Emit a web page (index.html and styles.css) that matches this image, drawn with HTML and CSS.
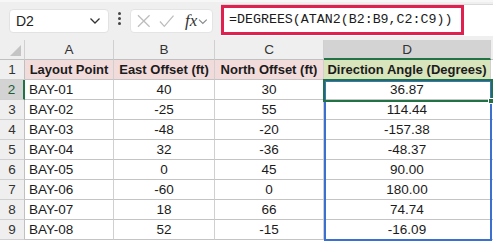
FILE: index.html
```html
<!DOCTYPE html>
<html>
<head>
<meta charset="utf-8">
<link rel="stylesheet" href="styles.css">
</head>
<body>
<div class="toolbar">
  <div class="namebox">
    <span class="name">D2</span>
    <svg class="chev" width="12" height="8" viewBox="0 0 12 8"><path d="M1.5 1.5 L6 6 L10.5 1.5" fill="none" stroke="#333" stroke-width="1.3"/></svg>
  </div>
  <div class="dots"><i></i><i></i><i></i></div>
  <div class="fxbox">
    <svg width="14" height="14" viewBox="0 0 14 14"><path d="M1 1 L13 13 M13 1 L1 13" stroke="#bdbdbd" stroke-width="1.3" fill="none"/></svg>
    <svg width="16" height="14" viewBox="0 0 16 14"><path d="M1 7.5 L5.5 12.5 L15 1.5" stroke="#bdbdbd" stroke-width="1.3" fill="none"/></svg>
    <span class="fx">fx</span>
    <svg width="10" height="7" viewBox="0 0 10 7"><path d="M1 1.5 L5 5.5 L9 1.5" fill="none" stroke="#888" stroke-width="1.2"/></svg>
  </div>
  <div class="formula">
    <div class="ftext">=DEGREES(ATAN2(B2:B9,C2:C9))</div>
  </div>
</div>
<div class="gap"></div>
<div class="sheet">
  <div class="grid">
    <div class="corner"><span class="tri"></span></div>
    <div class="ch">A</div><div class="ch">B</div><div class="ch">C</div><div class="ch sel">D</div><div class="ch end"></div>

    <div class="rh">1</div>
    <div class="c hd pink">Layout Point</div><div class="c hd pink">East Offset (ft)</div><div class="c hd pink">North Offset (ft)</div><div class="c hd green">Direction Angle (Degrees)</div><div class="c end"></div>

    <div class="rh rsel">2</div><div class="c l">BAY-01</div><div class="c">40</div><div class="c">30</div><div class="c">36.87</div><div class="c end"></div>
    <div class="rh">3</div><div class="c l">BAY-02</div><div class="c">-25</div><div class="c">55</div><div class="c">114.44</div><div class="c end"></div>
    <div class="rh">4</div><div class="c l">BAY-03</div><div class="c">-48</div><div class="c">-20</div><div class="c">-157.38</div><div class="c end"></div>
    <div class="rh">5</div><div class="c l">BAY-04</div><div class="c">32</div><div class="c">-36</div><div class="c">-48.37</div><div class="c end"></div>
    <div class="rh">6</div><div class="c l">BAY-05</div><div class="c">0</div><div class="c">45</div><div class="c">90.00</div><div class="c end"></div>
    <div class="rh">7</div><div class="c l">BAY-06</div><div class="c">-60</div><div class="c">0</div><div class="c">180.00</div><div class="c end"></div>
    <div class="rh">8</div><div class="c l">BAY-07</div><div class="c">18</div><div class="c">66</div><div class="c">74.74</div><div class="c end"></div>
    <div class="rh">9</div><div class="c l">BAY-08</div><div class="c">52</div><div class="c">-15</div><div class="c">-16.09</div><div class="c end"></div>
  </div>
  <div class="range"></div>
  <div class="active"><span class="handle"></span></div>
</div>
</body>
</html>
```
FILE: styles.css
```css
* { box-sizing: border-box; }
html, body { margin: 0; padding: 0; }
body {
  width: 493px;
  height: 244px;
  overflow: hidden;
  background: #ffffff;
  font-family: "Liberation Sans", Arial, sans-serif;
  color: #1b1b1b;
}
.toolbar {
  height: 36px;
  background: #efefef;
  border-top: 2px solid #f7f7f7;
  display: flex;
  align-items: flex-start;
}
.namebox {
  margin: 7px 0 0 9px;
  width: 100px;
  height: 24px;
  background: #fff;
  border: 1px solid #e2e2e2;
  border-radius: 4px;
  display: flex;
  align-items: center;
  justify-content: space-between;
  padding: 0 7px 0 6px;
}
.name { font-size: 14px; color: #222; }
.dots {
  width: 21px;
  height: 36px;
  display: flex;
  flex-direction: column;
  align-items: center;
  justify-content: center;
  gap: 2px;
  padding-bottom: 4px;
}
.dots i { display: block; width: 3px; height: 3px; background: #444; border-radius: 50%; }
.fxbox {
  margin-top: 7px;
  width: 83px;
  height: 24px;
  background: #fff;
  border: 1px solid #e4e4e4;
  border-radius: 4px;
  display: flex;
  align-items: center;
  padding: 0 4px 0 6px;
  gap: 9px;
}
.fxbox svg:nth-child(2) { margin-left: -1px; }
.fx {
  font-family: "Liberation Serif", "DejaVu Serif", serif;
  font-style: italic;
  font-size: 17px;
  color: #333;
  margin-left: 2px;
  margin-right: -8px;
}
.formula {
  margin: 2px 0 0 8px;
  flex: 1;
  height: 32px;
  background: #fff;
  border-top: 1px solid #dadada;
  position: relative;
}
.ftext {
  width: 243px;
  height: 30px;
  border: 3px solid #e0204f;
  font-family: "Liberation Mono", "DejaVu Sans Mono", monospace;
  font-size: 13.3px;
  line-height: 24px;
  padding-left: 5px;
  color: #1b1b1b;
  white-space: nowrap;
}
.gap { height: 4px; background: #efefef; }
.sheet { position: relative; height: 204px; }
.grid {
  display: grid;
  grid-template-columns: 25px 89px 101px 109px 167px 2px;
  grid-auto-rows: 20px;
  font-size: 13.5px;
}
.corner {
  background: #efefef;
  border-right: 1px solid #d0d0d0;
  border-bottom: 1px solid #c0c0c0;
  position: relative;
}
.tri {
  position: absolute;
  right: 3px;
  bottom: 3px;
  width: 0; height: 0;
  border-left: 11px solid transparent;
  border-bottom: 11px solid #c4c4c4;
}
.ch {
  background: #efefef;
  border-right: 1px solid #d0d0d0;
  border-bottom: 1px solid #c0c0c0;
  display: flex;
  align-items: center;
  justify-content: center;
  color: #333;
}
.ch.sel {
  background: #d3d3d3;
  border-bottom: 2px solid #217346;
  color: #333;
}
.ch.end { border-right: none; }
.rh {
  background: #efefef;
  border-right: 1px solid #c0c0c0;
  border-bottom: 1px solid #d0d0d0;
  display: flex;
  align-items: center;
  justify-content: center;
  color: #333;
}
.rh.rsel {
  background: #d3d3d3;
  border-right: 2px solid #217346;
  color: #1b5e3a;
}
.c {
  border-right: 1px solid #d0d0d0;
  border-bottom: 1px solid #c4c4c4;
  display: flex;
  align-items: center;
  justify-content: center;
  white-space: nowrap;
  overflow: hidden;
  background: #fff;
}
.c.l { justify-content: flex-start; padding-left: 4px; }
.c.end { border-right: none; }
.hd { font-weight: bold; font-size: 13px; }
.pink { background: #f2dcdb; }
.green { background: #d8e4bc; }
.range {
  position: absolute;
  left: 324px;
  top: 40px;
  width: 168px;
  height: 161px;
  border: 2px solid #3b6fd0;
}
.active {
  position: absolute;
  left: 323px;
  top: 39px;
  width: 170px;
  height: 23px;
  border: 2px solid #217346;
}
.handle {
  position: absolute;
  right: -3px;
  bottom: -4px;
  width: 6px;
  height: 6px;
  background: #217346;
  border: 1px solid #fff;
}
```
